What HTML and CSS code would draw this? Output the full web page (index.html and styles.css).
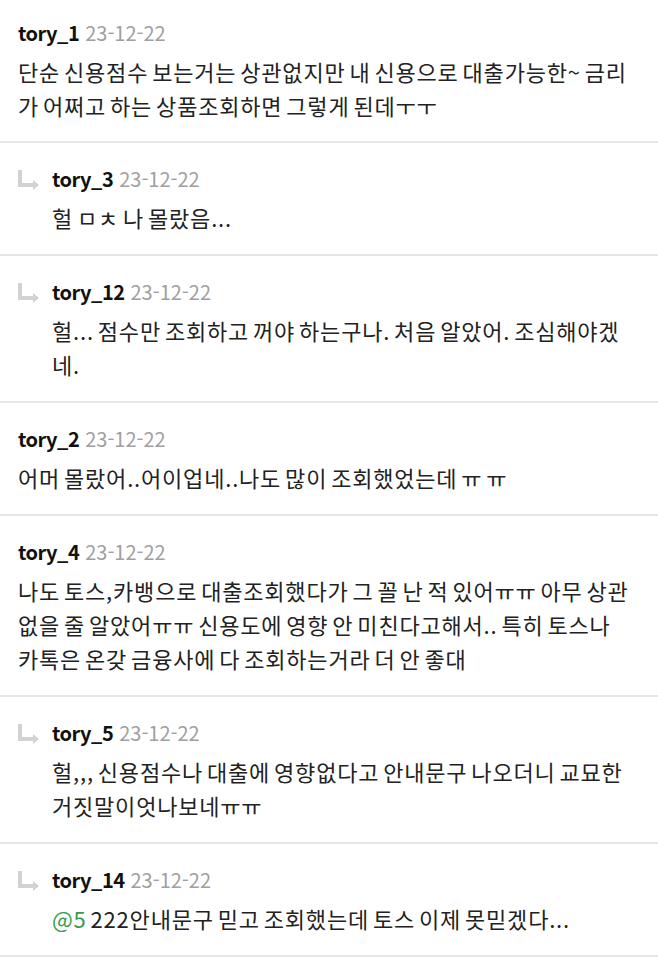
FILE: index.html
```html
<!DOCTYPE html>
<html lang="ko">
<head>
  <meta charset="UTF-8">
  <meta name="viewport" content="width=device-width, initial-scale=1.0">
  <title>댓글</title>
  <link rel="stylesheet" href="styles.css">
</head>
<body>
  <ul class="comment-list">
    <li class="comment first">
      <div class="meta"><span class="nick">tory_1</span><span class="date">23-12-22</span></div>
      <p class="text">단순 신용점수 보는거는 상관없지만 내 신용으로 대출가능한~ 금리가 어쩌고 하는 상품조회하면 그렇게 된데ㅜㅜ</p>
    </li>

    <li class="comment reply">
      <svg class="reply-icon" width="22" height="20" viewBox="0 0 22 20"><path d="M2 0 V15 H16" fill="none" stroke="#d2d2d2" stroke-width="4"/><path d="M15 10 L21 15 L15 20 Z" fill="#d2d2d2"/></svg>
      <div class="body">
        <div class="meta"><span class="nick">tory_3</span><span class="date">23-12-22</span></div>
        <p class="text">헐 ㅁㅊ 나 몰랐음...</p>
      </div>
    </li>

    <li class="comment reply">
      <svg class="reply-icon" width="22" height="20" viewBox="0 0 22 20"><path d="M2 0 V15 H16" fill="none" stroke="#d2d2d2" stroke-width="4"/><path d="M15 10 L21 15 L15 20 Z" fill="#d2d2d2"/></svg>
      <div class="body">
        <div class="meta"><span class="nick">tory_12</span><span class="date">23-12-22</span></div>
        <p class="text">헐... 점수만 조회하고 꺼야 하는구나. 처음 알았어. 조심해야겠네.</p>
      </div>
    </li>

    <li class="comment">
      <div class="meta"><span class="nick">tory_2</span><span class="date">23-12-22</span></div>
      <p class="text">어머 몰랐어..어이업네..나도 많이 조회했었는데 ㅠ ㅠ</p>
    </li>

    <li class="comment">
      <div class="meta"><span class="nick">tory_4</span><span class="date">23-12-22</span></div>
      <p class="text">나도 토스,카뱅으로 대출조회했다가 그 꼴 난 적 있어ㅠㅠ 아무 상관없을 줄 알았어ㅠㅠ 신용도에 영향 안 미친다고해서.. 특히 토스나 카톡은 온갖 금융사에 다 조회하는거라 더 안 좋대</p>
    </li>

    <li class="comment reply">
      <svg class="reply-icon" width="22" height="20" viewBox="0 0 22 20"><path d="M2 0 V15 H16" fill="none" stroke="#d2d2d2" stroke-width="4"/><path d="M15 10 L21 15 L15 20 Z" fill="#d2d2d2"/></svg>
      <div class="body">
        <div class="meta"><span class="nick">tory_5</span><span class="date">23-12-22</span></div>
        <p class="text">헐,,, 신용점수나 대출에 영향없다고 안내문구 나오더니 교묘한 거짓말이엇나보네ㅠㅠ</p>
      </div>
    </li>

    <li class="comment reply">
      <svg class="reply-icon" width="22" height="20" viewBox="0 0 22 20"><path d="M2 0 V15 H16" fill="none" stroke="#d2d2d2" stroke-width="4"/><path d="M15 10 L21 15 L15 20 Z" fill="#d2d2d2"/></svg>
      <div class="body">
        <div class="meta"><span class="nick">tory_14</span><span class="date">23-12-22</span></div>
        <p class="text"><span class="mention">@5</span> 222안내문구 믿고 조회했는데 토스 이제 못믿겠다...</p>
      </div>
    </li>
  </ul>
</body>
</html>
```

FILE: styles.css
```css
body {
  margin: 0;
  background: #fff;
  font-family: "Noto Sans CJK KR", "Noto Sans", sans-serif;
  color: #222;
}
.comment-list {
  list-style: none;
  margin: 0;
  padding: 0;
}
.comment {
  padding: 23px 23px 20px 18px;
  border-bottom: 2px solid #e6e6e6;
}
.comment.first {
  padding-top: 20px;
  padding-bottom: 19px;
}
.comment.reply {
  display: flex;
  gap: 12px;
}
.reply-icon {
  flex-shrink: 0;
  margin-top: 4px;
}
.body {
  flex: 1;
}
.meta {
  display: flex;
  align-items: baseline;
  gap: 6px;
  line-height: 26px;
}
.nick {
  font-size: 20px;
  font-weight: bold;
  color: #111;
  letter-spacing: -0.5px;
}
.date {
  font-size: 20px;
  color: #a0a0a0;
}
.text {
  margin: 8px 0 0;
  font-size: 22px;
  line-height: 34px;
  letter-spacing: 0.8px;
  word-spacing: -3px;
  word-break: break-all;
}
.mention {
  color: #3a9a4a;
}
```
